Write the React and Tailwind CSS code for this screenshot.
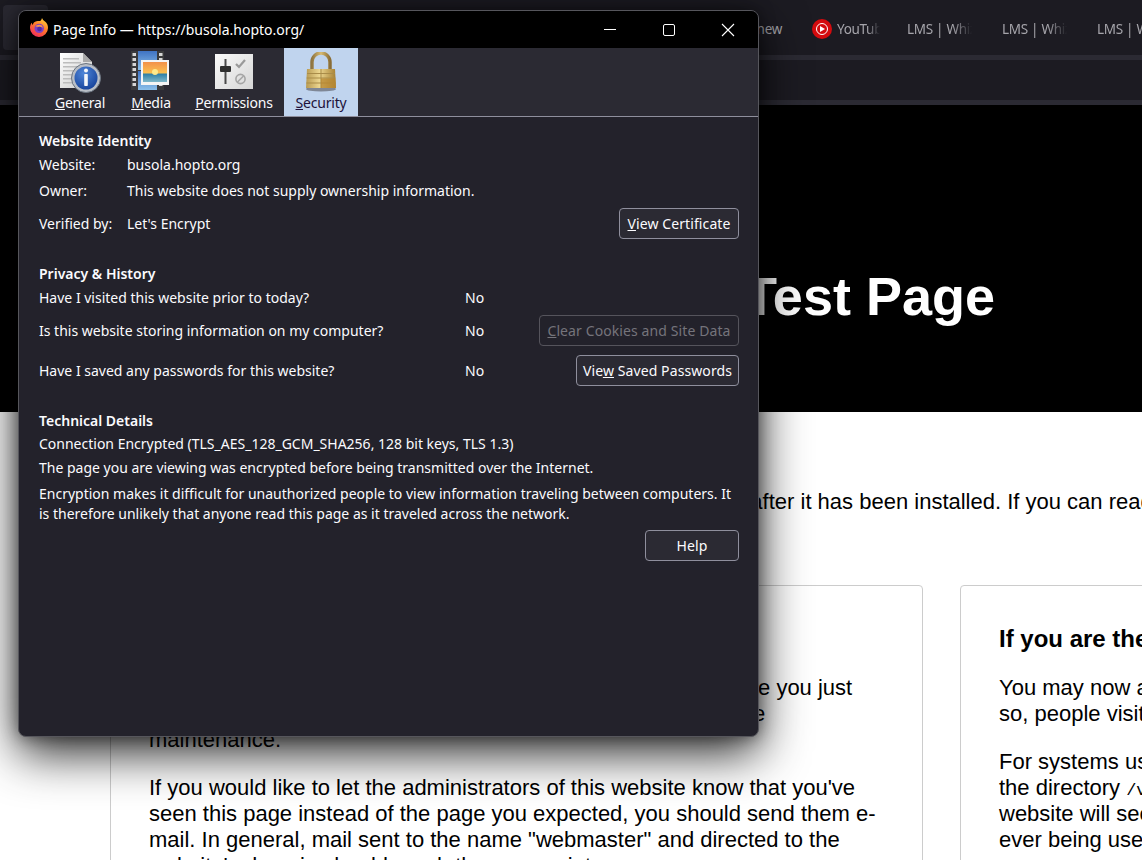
function FirefoxLogo() {
  return (
    <svg width="20" height="20" viewBox="0 0 20 20">
      <defs>
        <linearGradient id="ffOuter" x1="0.8" y1="0" x2="0.2" y2="1">
          <stop offset="0" stopColor="#ffd23a" />
          <stop offset="0.45" stopColor="#ff7a2a" />
          <stop offset="1" stopColor="#f0265f" />
        </linearGradient>
      </defs>
      <path d="M13 0c.6 1.600 1.600 2.400 3 3.400 2 1.700 3 3.700 3 6.600a9 9 0 1 1-18 0c0-2 .6-3.800 1.600-5.200.2 1 .6 1.700 1.200 2.200C4 5 5.400 3.400 7.500 3.200c1.600-.2 3.600.2 4.300-.6.500-.5.900-1.600 1.200-2.600z" fill="url(#ffOuter)" />
      <circle cx="10.200" cy="10.400" r="4.700" fill="#7c3fc4" />
      <path d="M6.500 8.500c1-1.800 4-2.500 5.800-1.200 1 .7 1.500 1.900 1.300 2.900-.7-1.100-1.800-1.500-3-1.400-1.600 0-3-.1-4.100-.3z" fill="#ff9a3c" />
      <circle cx="10.500" cy="11" r="2.300" fill="#4b2aa8" />
    </svg>
  );
}

function GeneralIcon() {
  return (
    <svg width="42" height="41" viewBox="0 0 42 41">
      <defs>
        <linearGradient id="giPage" x1="0" y1="0" x2="1" y2="1">
          <stop offset="0" stopColor="#ffffff" />
          <stop offset="1" stopColor="#c9c9c9" />
        </linearGradient>
        <radialGradient id="giBlue" cx="0.4" cy="0.3" r="0.8">
          <stop offset="0" stopColor="#4f86d8" />
          <stop offset="1" stopColor="#123d96" />
        </radialGradient>
      </defs>
      <path d="M1 1h23l9 9v26H1z" fill="url(#giPage)" />
      <path d="M24 1l9 9h-9z" fill="#a9a9a9" />
      <g fill="#bcbcbc">
        <rect x="4" y="6" width="16" height="1.500" />
        <rect x="4" y="10" width="18" height="1.500" />
        <rect x="4" y="14" width="24" height="1.500" />
        <rect x="4" y="18" width="20" height="1.500" />
        <rect x="4" y="22" width="16" height="1.500" />
        <rect x="4" y="26" width="14" height="1.500" />
        <rect x="4" y="30" width="14" height="1.500" />
      </g>
      <circle cx="27" cy="26" r="14.500" fill="#b9bec6" />
      <circle cx="27" cy="26" r="14.500" fill="none" stroke="#6b7480" strokeWidth="1" />
      <circle cx="27" cy="26" r="11.500" fill="url(#giBlue)" />
      <circle cx="27" cy="18.500" r="2" fill="#f4f6fa" />
      <rect x="25.200" y="22" width="3.600" height="12" rx="0.800" fill="#f4f6fa" />
    </svg>
  );
}

function MediaIcon() {
  return (
    <svg width="40" height="42" viewBox="0 0 40 42">
      <defs>
        <linearGradient id="miFilm" x1="0" y1="0" x2="0" y2="1">
          <stop offset="0" stopColor="#3f73c4" />
          <stop offset="1" stopColor="#8cc0ea" />
        </linearGradient>
        <linearGradient id="miSun" x1="0" y1="0" x2="0" y2="1">
          <stop offset="0" stopColor="#f2914b" />
          <stop offset="0.55" stopColor="#fcc04f" />
          <stop offset="0.6" stopColor="#2f7fa6" />
          <stop offset="1" stopColor="#7fb8c9" />
        </linearGradient>
      </defs>
      <rect x="0" y="0" width="33" height="39" fill="#3a3a3c" />
      <rect x="7" y="0" width="19" height="19" fill="url(#miFilm)" />
      <rect x="7" y="20" width="19" height="19" fill="url(#miFilm)" />
      <g fill="#d5d5d5">
        {[2, 7, 12, 17, 22, 27, 32].map((y) => (
          <g key={y}>
            <rect x="1.500" y={y} width="3.500" height="3" />
            <rect x="28" y={y} width="3.500" height="3" />
          </g>
        ))}
      </g>
      <rect x="10" y="9" width="28" height="25" fill="#f5f5f5" />
      <rect x="12" y="11" width="24" height="20" fill="url(#miSun)" />
      <circle cx="24" cy="21" r="3" fill="#ffe98a" />
    </svg>
  );
}

function PermissionsIcon() {
  return (
    <svg width="38" height="36" viewBox="0 0 38 36">
      <defs>
        <linearGradient id="piBox" x1="0" y1="0" x2="1" y2="1">
          <stop offset="0" stopColor="#fafafa" />
          <stop offset="1" stopColor="#d6d6d6" />
        </linearGradient>
      </defs>
      <rect x="0" y="0" width="38" height="35" fill="url(#piBox)" />
      <rect x="9.500" y="5" width="2" height="25" fill="#4a4a4a" />
      <rect x="5" y="12" width="11" height="6" rx="1" fill="#2f2f2f" />
      <path d="M21 10l3 3 6-7" fill="none" stroke="#9a9a9a" strokeWidth="2.200" />
      <circle cx="25.500" cy="25" r="4.600" fill="none" stroke="#a5a5a5" strokeWidth="1.600" />
      <path d="M22.500 28l6-6" stroke="#a5a5a5" strokeWidth="1.600" />
    </svg>
  );
}

function SecurityIcon() {
  return (
    <svg width="32" height="40" viewBox="0 0 32 40">
      <defs>
        <linearGradient id="siBody" x1="0" y1="0" x2="1" y2="0">
          <stop offset="0" stopColor="#b89a52" />
          <stop offset="0.45" stopColor="#ecd68f" />
          <stop offset="1" stopColor="#a67f32" />
        </linearGradient>
        <linearGradient id="siHook" x1="0" y1="0" x2="1" y2="0">
          <stop offset="0" stopColor="#8f7540" />
          <stop offset="0.5" stopColor="#d8bb72" />
          <stop offset="1" stopColor="#8a6d36" />
        </linearGradient>
      </defs>
      <ellipse cx="16" cy="37" rx="15" ry="2.500" fill="#7f8796" />
      <path d="M7 17V10a9 9 0 0 1 18 0v7" fill="none" stroke="url(#siHook)" strokeWidth="3.500" />
      <path d="M2 17h28l1 19H1z" fill="url(#siBody)" />
      <g stroke="#a98c49" strokeWidth="1">
        <path d="M2 21.500h28M1.700 26h28.600M1.400 31h29.200M16 17v19" />
      </g>
      <path d="M16 26.500h14.500l.5 9.500H16z" fill="#b8862e" opacity="0.700" />
    </svg>
  );
}

function YoutubeMusicIcon() {
  return (
    <svg width="20" height="20" viewBox="0 0 20 20">
      <circle cx="10" cy="10" r="10" fill="#d40b0e" />
      <circle cx="10" cy="10" r="5.500" fill="none" stroke="#fff" strokeWidth="1" />
      <path d="M8 7l5 3-5 3z" fill="#fff" />
    </svg>
  );
}

function NavTab({ icon, first, rest, active, className }) {
  return (
    <div className={`flex flex-col items-center h-[68px] ${active ? "bg-[#c0d4ee] text-[#20123a]" : "text-[#fbfbfe]"} ${className}`}>
      <div className="h-[46px] flex items-center justify-center pt-[2px]">{icon}</div>
      <div className="leading-[20px] mt-[-1px] tracking-[-0.2px]"><u>{first}</u>{rest}</div>
    </div>
  );
}

function DialogButton({ children, disabled, className }) {
  return (
    <button
      disabled={disabled}
      className={`h-[31px] rounded-[4px] border shrink-0 tracking-[0.1px] ${disabled ? "border-[#55545c] text-[#75747b] bg-[#23222b]" : "border-[#8f8f9d] text-[#fbfbfe] bg-[#2b2a33]"} ${className}`}
    >
      {children}
    </button>
  );
}

function PageInfoDialog() {
  return (
    <div className="absolute left-[18px] top-[10px] w-[741px] h-[727px] rounded-[8px] border border-[#56565c] overflow-hidden bg-[#23222b] text-[#fbfbfe] text-[14px] font-['Noto_Sans',sans-serif] flex flex-col shadow-[0_16px_48px_rgba(0,0,0,0.85),0_0_16px_rgba(0,0,0,0.4)]">
      {/* Title bar */}
      <div className="h-[37px] bg-black flex items-center shrink-0">
        <div className="ml-[10px] mr-[4px] mt-[-3px]"><FirefoxLogo /></div>
        <span className="text-white">Page Info — https://busola.hopto.org/</span>
        <div className="ml-auto flex items-center">
          <div className="w-[59px] flex justify-center"><div className="w-[12px] h-px bg-white" /></div>
          <div className="w-[59px] flex justify-center"><div className="w-[12px] h-[12px] border border-white rounded-[2px]" /></div>
          <div className="w-[59px] flex justify-center mr-[1px]">
            <svg width="14" height="14" viewBox="0 0 14 14"><path d="M1 1l12 12M13 1L1 13" stroke="#fff" strokeWidth="1.100" /></svg>
          </div>
        </div>
      </div>

      {/* Toolbar */}
      <div className="h-[69px] bg-[#2b2a33] border-b border-[#8f8f9d] flex shrink-0 pl-[32px]">
        <NavTab icon={<GeneralIcon />} first="G" rest="eneral" className="w-[58px]" />
        <NavTab icon={<MediaIcon />} first="M" rest="edia" className="w-[84px]" />
        <NavTab icon={<PermissionsIcon />} first="P" rest="ermissions" className="w-[90px] ml-[-4px]" />
        <NavTab icon={<SecurityIcon />} first="S" rest="ecurity" active className="w-[74px] ml-[5px]" />
      </div>

      {/* Content */}
      <div className="pl-[20px] pr-[19px] pt-[12px] flex flex-col">
        <div className="h-[24px] leading-[24px] font-semibold">Website Identity</div>
        <div className="h-[24px] flex items-center mt-[-1px]"><span className="w-[88px]">Website:</span><span>busola.hopto.org</span></div>
        <div className="h-[24px] mt-[2px] flex items-center"><span className="w-[88px]">Owner:</span><span>This website does not supply ownership information.</span></div>
        <div className="h-[31px] mt-[6px] flex items-center">
          <span className="w-[88px]">Verified by:</span><span>Let's Encrypt</span>
          <DialogButton className="ml-auto w-[120px]"><u>V</u>iew Certificate</DialogButton>
        </div>

        <div className="h-[24px] leading-[24px] mt-[23px] font-semibold">Privacy &amp; History</div>
        <div className="h-[24px] flex items-center mt-[-1px]"><span className="w-[426px]">Have I visited this website prior to today?</span><span>No</span></div>
        <div className="h-[31px] mt-[6px] flex items-center">
          <span className="w-[426px]">Is this website storing information on my computer?</span><span>No</span>
          <DialogButton disabled className="ml-auto w-[200px]"><u>C</u>lear Cookies and Site Data</DialogButton>
        </div>
        <div className="h-[31px] mt-[9px] flex items-center">
          <span className="w-[426px]">Have I saved any passwords for this website?</span><span>No</span>
          <DialogButton className="ml-auto w-[163px]">Vie<u>w</u> Saved Passwords</DialogButton>
        </div>

        <div className="h-[24px] leading-[24px] mt-[23px] font-semibold">Technical Details</div>
        <div className="h-[22px] leading-[22px]">Connection Encrypted (TLS_AES_128_GCM_SHA256, 128 bit keys, TLS 1.3)</div>
        <div className="h-[22px] leading-[22px] mt-[2px]">The page you are viewing was encrypted before being transmitted over the Internet.</div>
        <div className="leading-[20px] mt-[5px]">
          Encryption makes it difficult for unauthorized people to view information traveling between computers. It is therefore unlikely that anyone read this page as it traveled across the network.
        </div>
        <DialogButton className="ml-auto mt-[6px] w-[94px]">Help</DialogButton>
      </div>
    </div>
  );
}

function BrowserTab({ text, icon, end }) {
  return (
    <div className={`w-[95px] shrink-0 flex items-center ${end ? "justify-end pr-[30px]" : ""}`}>
      {icon && <div className="mr-[5px] shrink-0">{icon}</div>}
      <span className={`whitespace-nowrap tracking-[-0.3px] ${end ? "shrink-0" : `overflow-hidden [mask-image:linear-gradient(to_right,black_70%,transparent)] ${icon ? "w-[43px]" : "w-[65px]"}`}`}>{text}</span>
    </div>
  );
}

export default function App() {
  return (
    <div className="relative w-[1142px] h-[860px] overflow-hidden bg-white font-['Liberation_Sans',Arial,sans-serif] text-black">
      {/* Browser chrome */}
      <div className="h-[55px] bg-[#1c1b22] flex items-center text-[13.5px] text-[#a5a4aa] font-['Noto_Sans',sans-serif]">
        <div className="w-[45px] h-[45px] shrink-0 ml-[3px] rounded-[4px] bg-[#2b2a33]" />
        <div className="ml-[669px] flex pt-[3px]">
          <BrowserTab text="What's new" end />
          <BrowserTab text="YouTube Music" icon={<YoutubeMusicIcon />} />
          <BrowserTab text="LMS | Whizlabs" />
          <BrowserTab text="LMS | Whizlabs" />
          <BrowserTab text="LMS | Whizlabs" />
        </div>
      </div>
      <div className="h-[5px] bg-[#2b2a33]" />
      <div className="h-[40px] bg-[#1c1b22]" />
      <div className="h-[5px] bg-[#2b2a33]" />

      {/* Test page behind the dialog */}
      <div className="h-[307px] bg-black flex items-center justify-end pr-[147px] pt-[76px]">
        <h1 className="text-[54px] font-bold text-white whitespace-nowrap">HTTP Server Test Page</h1>
      </div>
      <p className="pl-[110px] pt-[77px] h-[173px] text-[22px] leading-[26px] whitespace-nowrap">
        This page is used to test the proper operation of the HTTP server after it has been installed. If you can read this page, it means that the HTTP server installed at this site is working properly.
      </p>
      <div className="flex gap-[37px] pl-[110px] w-[1882px] text-[22px] leading-[26px]">
        <div className="w-[813px] h-[400px] shrink-0 border border-[#cccccc] rounded-[4px] px-[38px] pt-[39px]">
          <h2 className="font-bold text-[24px] leading-[28px] mb-[22px]">If you are a member of the general public:</h2>
          <p>The fact that you are seeing this page indicates that the website you just visited is either experiencing problems, or is undergoing routine maintenance.</p>
          <p className="mt-[22px]">If you would like to let the administrators of this website know that you've seen this page instead of the page you expected, you should send them e-mail. In general, mail sent to the name "webmaster" and directed to the website's domain should reach the appropriate person.</p>
        </div>
        <div className="w-[813px] h-[400px] shrink-0 border border-[#cccccc] rounded-[4px] px-[38px] pt-[39px]">
          <h2 className="font-bold text-[24px] leading-[28px] mb-[22px]">If you are the website administrator:</h2>
          <p>You may now add content to the webroot directory. Note that until you do so, people visiting your website will see this page, and not your content.</p>
          <p className="mt-[22px]">For systems using the Apache HTTP Server: You may now add content to the directory <code className="font-['Liberation_Mono',monospace] text-[17px] leading-none">/var/www/html/</code>. Note that until you do so, people visiting your website will see this page, and not your content. To prevent this page from ever being used, follow the instructions in the file.</p>
        </div>
      </div>

      <PageInfoDialog />
    </div>
  );
}
